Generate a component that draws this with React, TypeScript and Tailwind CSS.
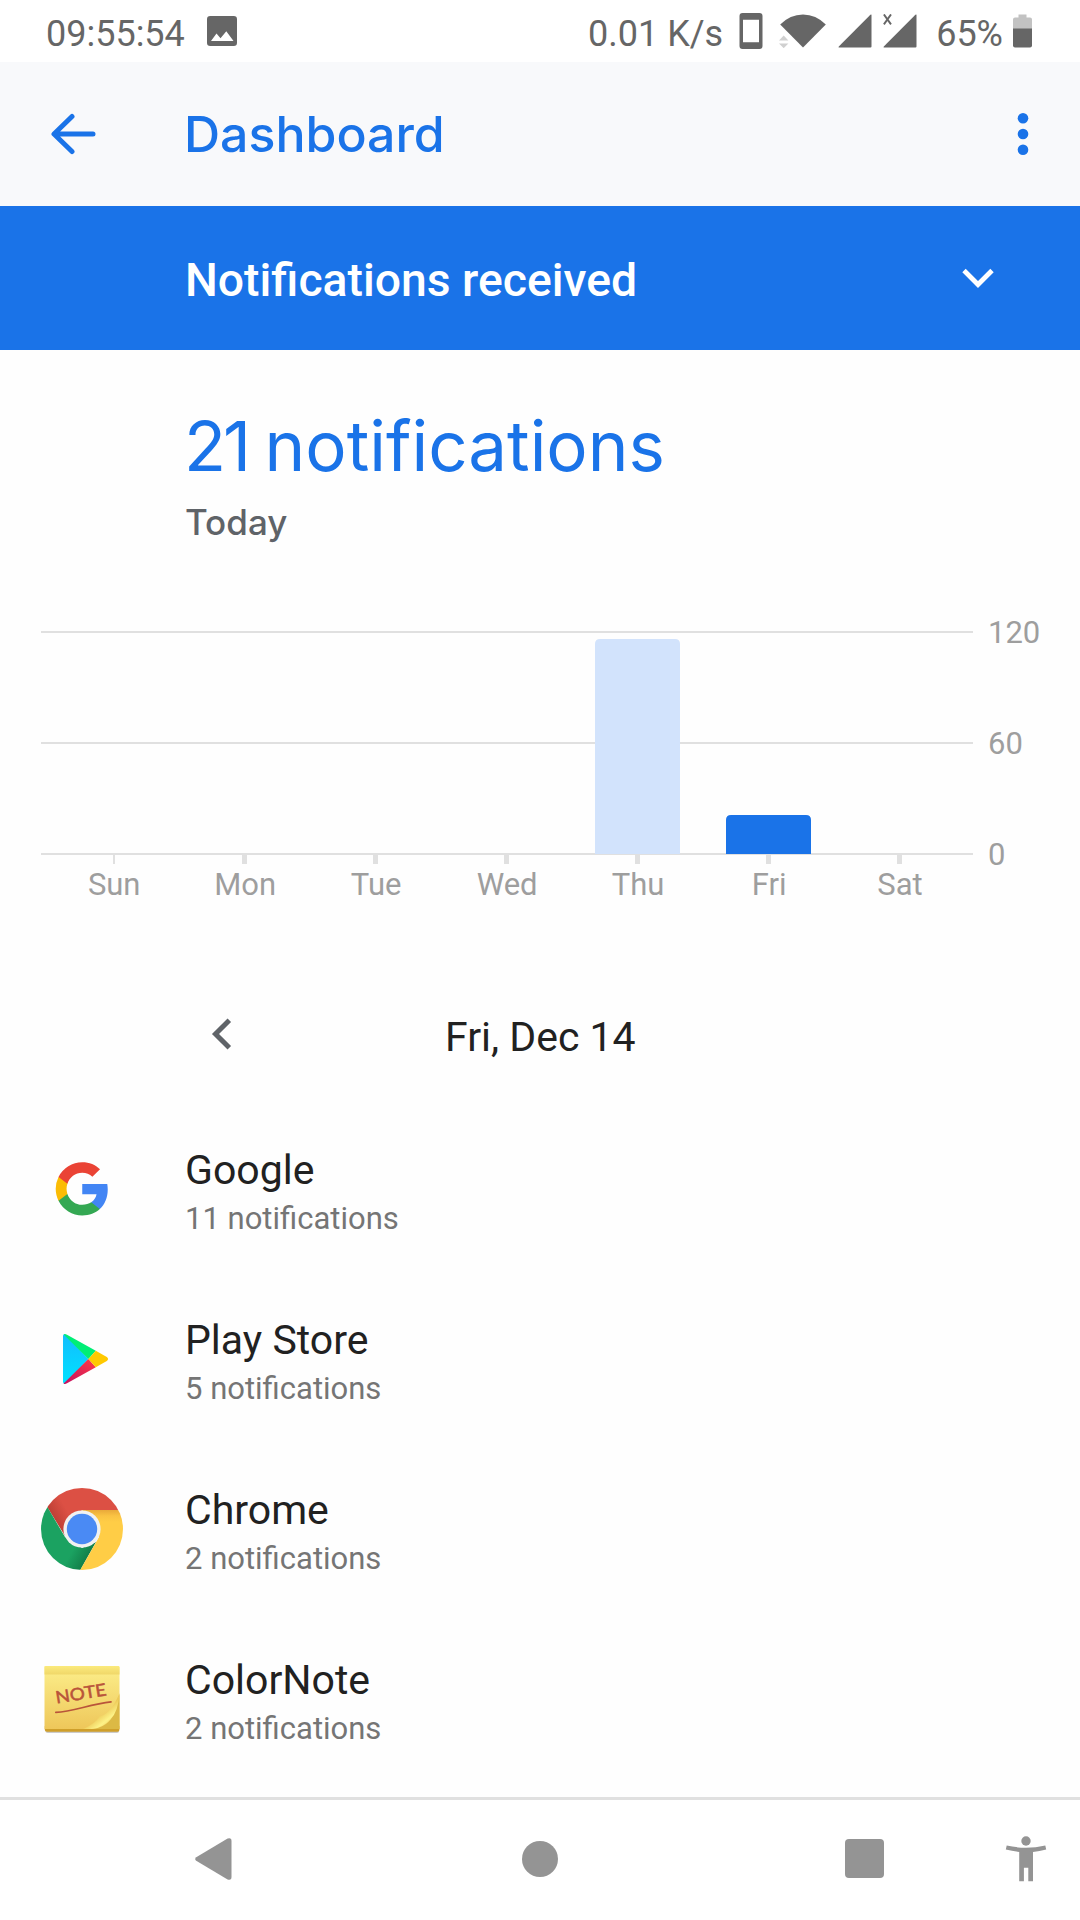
const BLUE = "#1a73e8";

const days = [
    { label: "Sun", value: 0 },
    { label: "Mon", value: 0 },
    { label: "Tue", value: 0 },
    { label: "Wed", value: 0 },
    { label: "Thu", value: 116 },
    { label: "Fri", value: 21, today: true },
    { label: "Sat", value: 0 }
];

const apps = [
    { name: "Google", count: 11, icon: GoogleIcon },
    { name: "Play Store", count: 5, icon: PlayStoreIcon },
    { name: "Chrome", count: 2, icon: ChromeIcon },
    { name: "ColorNote", count: 2, icon: ColorNoteIcon }
];

function GoogleIcon() {
    return (
        <svg width="82" height="82" viewBox="0 0 82 82">
            <g transform="translate(14.7 14.3) scale(2.95)">
                <path fill="#4285f4" d="M17.64 9.2c0-.637-.057-1.251-.164-1.84H9v3.481h4.844c-.209 1.125-.843 2.078-1.796 2.717v2.258h2.908c1.702-1.567 2.684-3.874 2.684-6.615z" />
                <path fill="#34a853" d="M9 18c2.43 0 4.467-.806 5.956-2.18l-2.908-2.259c-.806.54-1.837.86-3.048.86-2.344 0-4.328-1.584-5.036-3.711H.957v2.332A8.997 8.997 0 0 0 9 18z" />
                <path fill="#fbbc05" d="M3.964 10.71A5.41 5.41 0 0 1 3.682 9c0-.593.102-1.17.282-1.71V4.958H.957A8.996 8.996 0 0 0 0 9c0 1.452.348 2.827.957 4.042l3.007-2.332z" />
                <path fill="#ea4335" d="M9 3.58c1.321 0 2.508.454 3.44 1.345l2.582-2.58C13.463.891 11.426 0 9 0A8.997 8.997 0 0 0 .957 4.958L3.964 7.29C4.672 5.163 6.656 3.58 9 3.58z" />
            </g>
        </svg>
    );
}

function PlayStoreIcon() {
    return (
        <svg width="82" height="82" viewBox="0 0 82 82">
            <defs>
                <linearGradient id="play-blue" x1="0" y1="0" x2="0" y2="1">
                    <stop offset="0" stopColor="#13bdfd" />
                    <stop offset="1" stopColor="#00e2ff" />
                </linearGradient>
                <linearGradient id="play-red" x1="1" y1="0" x2="0" y2="1">
                    <stop offset="0" stopColor="#ff3a44" />
                    <stop offset="1" stopColor="#c31162" />
                </linearGradient>
            </defs>
            <path fill="url(#play-blue)" d="M22 18Q22 16 24 16.4L47.4 41 24 65.8Q22 66 22 64z" />
            <path fill="#00ee76" d="M22.6 16.6Q23.8 15.4 26 16.8L54.8 32.8 47.4 41z" />
            <path fill="url(#play-red)" d="M22.6 65.4Q23.8 66.6 26 65.2L54.8 49.2 47.4 41z" />
            <path fill="#ffc900" d="M54.8 32.8L65.8 39Q68.4 41 65.8 43L54.8 49.2 47.4 41z" />
        </svg>
    );
}

function ChromeIcon() {
    return (
        <svg width="82" height="82" viewBox="0 0 82 82">
            <defs>
                <clipPath id="chrome-clip">
                    <circle cx="41" cy="41" r="41" />
                </clipPath>
                <linearGradient id="chrome-red" gradientUnits="userSpaceOnUse" x1="10" y1="36" x2="28" y2="26">
                    <stop offset="0" stopColor="#b53a31" />
                    <stop offset="1" stopColor="#dc5044" />
                </linearGradient>
                <linearGradient id="chrome-yellow" gradientUnits="userSpaceOnUse" x1="0" y1="22" x2="0" y2="34">
                    <stop offset="0" stopColor="#e9a93a" />
                    <stop offset="0.5" stopColor="#fac343" />
                    <stop offset="1" stopColor="#ffcd46" />
                </linearGradient>
                <linearGradient id="chrome-green" gradientUnits="userSpaceOnUse" x1="47" y1="68" x2="33" y2="60">
                    <stop offset="0" stopColor="#12804a" />
                    <stop offset="1" stopColor="#1ba261" />
                </linearGradient>
            </defs>
            <g clipPath="url(#chrome-clip)">
                <path fill="url(#chrome-red)" d="M0 0H82V22H41L24 48 6.5 19.5z" />
                <path fill="url(#chrome-green)" d="M6.5 19.3L24 49 41 60 55 54 39.3 82H0V19z" />
                <path fill="url(#chrome-yellow)" d="M41 22H82V82H39.2L58 49z" />
            </g>
            <circle cx="41" cy="41" r="18.6" fill="#f1f1f1" />
            <circle cx="41" cy="41" r="15.2" fill="#4a8af4" />
        </svg>
    );
}

function ColorNoteIcon() {
    return (
        <svg width="82" height="82" viewBox="0 0 82 82">
            <defs>
                <linearGradient id="note-body" x1="0" y1="0" x2="0" y2="1">
                    <stop offset="0" stopColor="#fcee8a" />
                    <stop offset="1" stopColor="#eec75a" />
                </linearGradient>
                <linearGradient id="note-strip" x1="0" y1="0" x2="0" y2="1">
                    <stop offset="0" stopColor="#fbea7c" />
                    <stop offset="1" stopColor="#f0d769" />
                </linearGradient>
                <linearGradient id="note-curl" gradientUnits="userSpaceOnUse" x1="58" y1="56" x2="70" y2="71">
                    <stop offset="0" stopColor="#edc957" />
                    <stop offset="0.5" stopColor="#fdf287" />
                    <stop offset="1" stopColor="#e9c84f" />
                </linearGradient>
            </defs>
            <rect x="4.5" y="70" width="73.5" height="5" rx="2" fill="#000" opacity="0.2" />
            <path fill="#cf9f2a" d="M3.8 68H78.4V72Q78.4 73.8 76.5 73.8H6Q3.8 73.8 3.8 72z" />
            <path fill="url(#note-body)" d="M3.5 9H78.5V71H3.5z" />
            <path fill="url(#note-strip)" d="M3.5 8.6Q3.5 8 4.5 8H77.5Q78.5 8 78.5 9V16.5H3.5z" />
            <path fill="#dcb945" d="M78.5 35V71H52Q66 69 71 59 76 51 78.5 35z" />
            <path fill="url(#note-curl)" d="M42 71Q54 66 59 58 69 57 78.2 36 77.5 53 69.5 61.5 62 70 51 71z" />
            <text x="15.6" y="45.4" textLength="51" lengthAdjust="spacingAndGlyphs" transform="rotate(-9 15.6 45.4)" fill="#b9543a" stroke="#b9543a" strokeWidth="0.5" className="font-['Lato',sans-serif] text-[17px]">NOTE</text>
            <path d="M14.8 54.4Q24 54 42 49.5T70 43.9" fill="none" stroke="#b9543a" strokeWidth="1.7" strokeLinecap="round" />
        </svg>
    );
}

function StatusBar() {
    return (
        <div className="flex h-[62px] items-center justify-between bg-white pr-12 pl-[46px] text-[36px] leading-none text-[#666]">
            <div className="flex items-center">
                <span className="mt-[5px]">09:55:54</span>
                <svg className="ml-[22px]" width="30" height="30" viewBox="0 0 30 30" fill="#666">
                    <path fillRule="evenodd" d="M3.2 0H26.8Q30 0 30 3.2V26.8Q30 30 26.8 30H3.2Q0 30 0 26.8V3.2Q0 0 3.2 0zM4 25H26.5L19.3 15.3 13.5 22.3 9.5 17.5z" />
                </svg>
            </div>
            <div className="flex items-center">
                <span className="mt-[5px] mr-[16px]">0.01 K/s</span>
                <svg width="24" height="36" viewBox="0 0 24 36">
                    <path fill="#666" fillRule="evenodd" d="M3.5 0H20.5Q23.5 0 23.5 3V33Q23.5 36 20.5 36H3.5Q.5 36 .5 33V3Q.5 0 3.5 0zM4 6.8V29.3H20V6.8z" />
                </svg>
                <svg className="ml-[16px]" width="47" height="34" viewBox="0 0 47 34">
                    <path fill="#666" d="M1.2 10.6Q11 .5 24 .5T46.8 10.6L24 33.5z" />
                    <path fill="#d0d0d0" d="M0 26.6L4.7 21.4 9.4 26.6zM0 29.4H9.4L4.7 34.2z" />
                </svg>
                <svg className="ml-3" width="34" height="34" viewBox="0 0 34 34">
                    <path fill="#666" d="M33.5 1V32.5Q33.5 33.5 32.5 33.5H1Q0 33.5.8 32.6L32.4.8Q33.5 0 33.5 1z" />
                </svg>
                <svg className="ml-[11px]" width="34" height="34" viewBox="0 0 34 34">
                    <path fill="#666" d="M33.5 1V32.5Q33.5 33.5 32.5 33.5H1Q0 33.5.8 32.6L32.4.8Q33.5 0 33.5 1z" />
                    <path d="M.9.4L8 10.4M8 .4L.9 10.4" stroke="#666" strokeWidth="1.9" />
                </svg>
                <span className="mt-[5px] ml-[19px]">65%</span>
                <svg className="ml-[10px]" width="19" height="34" viewBox="0 0 19 34">
                    <path fill="#c2c2c2" d="M5.5.5H13.5V3.5H17Q19 3.5 19 5.5V15H0V5.5Q0 3.5 2 3.5H5.5z" />
                    <path fill="#666" d="M0 14.5H19V31.5Q19 33.5 17 33.5H2Q0 33.5 0 31.5z" />
                </svg>
            </div>
        </div>
    );
}

function AppBar() {
    return (
        <header className="flex h-36 items-center bg-[#f8f9fb] pr-[51px] pl-[51px]">
            <svg width="45" height="42" viewBox="0 0 45 42" fill="none" stroke={BLUE} strokeWidth="5" strokeLinecap="round" strokeLinejoin="round">
                <path d="M42 21H3.5M21 3.5L3 21 21 38.5" />
            </svg>
            <h1 className="ml-[88px] flex-1 font-['Inter',sans-serif] text-[50px] leading-none font-medium text-[#1a73e8]">Dashboard</h1>
            <svg width="12" height="44" viewBox="0 0 12 44" fill={BLUE}>
                <circle cx="6" cy="6.3" r="5.3" />
                <circle cx="6" cy="22" r="5.3" />
                <circle cx="6" cy="37.7" r="5.3" />
            </svg>
        </header>
    );
}

function UsageChart() {
    const baseline = 254;
    const unit = 222 / 120;

    return (
        <svg width="1080" height="320" viewBox="0 0 1080 320" className="block text-[31px]">
            {[120, 60, 0].map((tick) => (
                <g key={tick}>
                    <rect x="41" y={baseline - 1 - tick * unit} width="932" height="2" fill="#e0e0e0" />
                    <text x="988" y={baseline + 11 - tick * unit} fill="#9e9e9e">{tick}</text>
                </g>
            ))}
            {days.map((day, index) => {
                const center = 113.7 + index * 130.97;
                const height = Math.round(day.value * unit);
                return (
                    <g key={day.label}>
                        <rect x={index === 0 ? 113 : Math.round(center - 2.5)} y="255" width={index === 0 ? 2 : 5} height="9" fill="#e0e0e0" />
                        {height > 0 && (
                            <path
                                fill={day.today ? BLUE : "#d2e3fc"}
                                transform={`translate(${Math.round(center - 42.5)} ${baseline - height})`}
                                d={`M0 ${height}V5Q0 0 5 0H80Q85 0 85 5V${height}z`}
                            />
                        )}
                        <text x={center + 0.5} y="295" textAnchor="middle" fill="#9e9e9e">{day.label}</text>
                    </g>
                );
            })}
        </svg>
    );
}

function NavigationBar() {
    return (
        <nav className="flex h-[123px] items-center border-t-[3px] border-[#e0e0e0] bg-white pb-[3px] pl-[195px]">
            <svg width="37" height="42" viewBox="0 0 37 42" fill="#949494">
                <path d="M1.2 19.2L32.6.6Q36.5-.8 36.5 3V39Q36.5 42.8 32.6 41.4L1.2 22.8Q-.8 21 1.2 19.2z" />
            </svg>
            <div className="ml-[290px] h-9 w-9 rounded-full bg-[#949494]" />
            <div className="ml-[287px] h-[39px] w-[39px] rounded-[4px] bg-[#949494]" />
            <svg className="ml-[121px]" width="42" height="46" viewBox="0 0 42 46" fill="#949494">
                <circle cx="21" cy="5" r="4.7" />
                <path d="M1.7 9.5Q21 14 40.3 9.5L41.2 13.6Q34.5 15.3 28 16V45.3H23.3V31.7H18.9V45.3H14.2V16Q7.5 15.3.8 13.6z" />
            </svg>
        </nav>
    );
}

export default function App() {
    return (
        <div className="flex h-[1920px] w-[1080px] flex-col overflow-hidden bg-[#fefefe] font-['Roboto',sans-serif]">
            <StatusBar />
            <AppBar />

            <div className="flex h-36 items-center justify-between bg-[#1a73e8] pr-[86px] pl-[185px]">
                <span className="mt-[4px] text-[46.3px] leading-none font-medium text-white">Notifications received</span>
                <svg className="-mt-px" width="32" height="20" viewBox="0 0 32 20" fill="none" stroke="#fff" strokeWidth="4.8">
                    <path d="M2 2.5L16 16.5 30 2.5" />
                </svg>
            </div>

            <section className="h-[250px] pt-[60px] pl-[184px] font-['Inter',sans-serif]">
                <h2 className="text-[69px] leading-[72px] text-[#1a73e8]">
                    <span className="tracking-[-3px]">21 </span>notifications
                </h2>
                <p className="mt-[20px] pl-px text-[35px] leading-[40px] font-medium text-[#5f6368]">Today</p>
            </section>

            <UsageChart />

            <div className="flex h-[184px] items-center pt-[48px] pl-[211px]">
                <svg className="-mt-[4px]" width="21" height="32" viewBox="0 0 21 32" fill="none" stroke="#5f6368" strokeWidth="5">
                    <path d="M18.3 2.2L4.5 16 18.3 29.8" />
                </svg>
                <span className="mt-[2px] ml-[213px] text-[41px] leading-none text-[#212121]">Fri, Dec 14</span>
            </div>

            <ul className="flex-1">
                {apps.map((app) => (
                    <li key={app.name} className="flex h-[170px] items-center gap-[62px] pl-[41px]">
                        <app.icon />
                        <div className="pt-[11px]">
                            <div className="text-[41px] leading-[49px] text-[#212121]">{app.name}</div>
                            <div className="text-[31px] leading-[48px] text-[#757575]">{app.count} notifications</div>
                        </div>
                    </li>
                ))}
            </ul>

            <NavigationBar />
        </div>
    );
}
